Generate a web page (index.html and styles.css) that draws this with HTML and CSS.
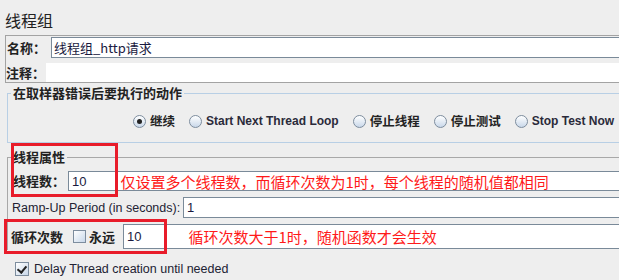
FILE: index.html
```html
<!DOCTYPE html>
<html lang="zh-CN">
<head>
  <meta charset="UTF-8">
  <title>线程组</title>
  <link rel="stylesheet" href="styles.css">
</head>
<body>
  <div class="page">
    <h1 class="title">线程组</h1>

    <div class="name-panel">
      <div class="name-row">
        <span class="label name-label">名称：</span>
        <div class="field name-field">线程组_http请求</div>
      </div>
      <div class="comment-row">
        <span class="label comment-label">注释：</span>
        <div class="field comment-field"></div>
      </div>
    </div>

    <fieldset class="group error-group">
      <legend>在取样器错误后要执行的动作</legend>
      <div class="radio-row">
        <label class="option"><span class="radio checked"></span><span class="cn">继续</span></label>
        <label class="option"><span class="radio"></span><span class="en">Start Next Thread Loop</span></label>
        <label class="option"><span class="radio"></span><span class="cn">停止线程</span></label>
        <label class="option"><span class="radio"></span><span class="cn">停止测试</span></label>
        <label class="option"><span class="radio"></span><span class="en">Stop Test Now</span></label>
      </div>
    </fieldset>

    <fieldset class="group thread-group">
      <legend>线程属性</legend>
      <div class="prop-row threads-row">
        <span class="label threads-label">线程数：</span>
        <div class="field">10<span class="note note-threads">仅设置多个线程数，而循环次数为1时，每个线程的随机值都相同</span></div>
      </div>
      <div class="prop-row ramp-row">
        <span class="plain ramp-label">Ramp-Up Period (in seconds):</span>
        <div class="field">1</div>
      </div>
      <div class="prop-row loop-row">
        <span class="label loop-label">循环次数</span>
        <span class="checkbox"></span>
        <span class="label forever-label">永远</span>
        <div class="field loop-field">10<span class="note note-loop">循环次数大于1时，随机函数才会生效</span></div>
      </div>
    </fieldset>

    <div class="delay-row">
      <span class="checkbox checked"></span>
      <span class="plain">Delay Thread creation until needed</span>
    </div>

    <div class="mark mark-threads"></div>
    <div class="mark mark-loop"></div>
  </div>
</body>
</html>
```

FILE: styles.css
```css
body {
  margin: 0;
  width: 619px;
  height: 280px;
  overflow: hidden;
  background: #eeeeee;
  color: #333333;
  font-family: "Liberation Sans", Arial, "Noto Sans CJK SC", sans-serif;
}

.page {
  position: relative;
  width: 619px;
  height: 280px;
  overflow: hidden;
}

.title {
  margin: 0;
  height: 25px;
  padding: 10px 0 0 5px;
  box-sizing: border-box;
  font-family: "Noto Sans CJK SC", sans-serif;
  font-size: 16px;
  font-weight: normal;
  line-height: 20px;
  color: #222222;
}

.label {
  font-family: "Noto Sans CJK SC", sans-serif;
  font-size: 13px;
  font-weight: bold;
  line-height: 16px;
  color: #222222;
  flex-shrink: 0;
}

.plain {
  font-size: 12.5px;
  line-height: 16px;
  color: #222233;
  flex-shrink: 0;
}

/* text fields */
.field {
  flex: 1;
  min-width: 0;
  display: flex;
  align-items: center;
  box-sizing: border-box;
  background: #ffffff;
  border: 1px solid #7a8a99;
  border-right: none;
  padding-left: 3px;
  font-size: 13px;
  color: #1a1a40;
  white-space: nowrap;
  overflow: hidden;
}

/* name / comment panel */
.name-panel {
  margin: 10px 0 0 5px;
  border: 1px solid #a3a3a3;
  border-right: none;
}

.name-row {
  display: flex;
  align-items: center;
  padding-top: 1px;
}

.name-label {
  width: 44px;
  padding-left: 1px;
}

.name-field {
  height: 21px;
  font-family: "Noto Sans CJK SC", sans-serif;
  padding-left: 2px;
}

.comment-row {
  display: flex;
  align-items: center;
  margin-top: 5px;
}

.comment-label {
  width: 40px;
}

.comment-field {
  height: 19px;
  border: none;
}

/* titled groups */
.group {
  margin: 2px 0 0 7px;
  padding: 0;
  min-width: 0;
  border: 1px solid #b8cfe5;
  border-right: none;
}

.group legend {
  margin-left: 3px;
  padding: 0 2px;
  font-family: "Noto Sans CJK SC", sans-serif;
  font-size: 13px;
  font-weight: bold;
  line-height: 16px;
  color: #222222;
}

.error-group {
  padding: 12px 0 13px 0;
}

.radio-row {
  display: flex;
  align-items: center;
  gap: 14px;
  height: 16px;
  padding-left: 125px;
  white-space: nowrap;
}

.option {
  display: flex;
  align-items: center;
  gap: 4px;
  flex-shrink: 0;
}

.option .cn {
  font-family: "Noto Sans CJK SC", sans-serif;
  font-size: 12.5px;
  font-weight: bold;
  line-height: 16px;
  color: #222222;
}

.option .en {
  font-size: 12px;
  font-weight: bold;
  line-height: 16px;
  color: #2a2a3a;
}

.radio {
  position: relative;
  width: 13px;
  height: 13px;
  box-sizing: border-box;
  border-radius: 50%;
  border: 1px solid #7d8d9e;
  background: linear-gradient(#ffffff, #c9d8ea);
}

.radio.checked::after {
  content: "";
  position: absolute;
  left: 3px;
  top: 3px;
  width: 5px;
  height: 5px;
  border-radius: 50%;
  background: #222222;
}

.checkbox {
  position: relative;
  flex-shrink: 0;
  width: 13px;
  height: 13px;
  box-sizing: border-box;
  border: 1px solid #7d8d9e;
  background: linear-gradient(135deg, #ffffff, #c9d8ea);
}

.checkbox.checked::after {
  content: "";
  position: absolute;
  left: 3px;
  top: 1px;
  width: 4px;
  height: 7px;
  border-right: 2px solid #222222;
  border-bottom: 2px solid #222222;
  transform: rotate(40deg);
}

.thread-group {
  margin-top: 6px;
  padding: 6px 0 1px 5px;
  border-color: #a8a8a8;
  border-bottom: none;
}

.thread-group legend {
  margin-left: -2px;
}

.prop-row {
  display: flex;
  align-items: center;
}

.threads-row .field {
  height: 20px;
}

.threads-label {
  width: 55px;
}

.ramp-row {
  margin-top: 6px;
}

.ramp-row .field {
  height: 21px;
}

.ramp-label {
  width: 171px;
  margin-left: -1px;
}

.loop-row {
  margin-top: 6px;
}

.loop-label {
  width: 62px;
  margin-left: -2px;
}

.forever-label {
  width: 34px;
  margin-left: 2px;
  padding-left: 1px;
}

.loop-field {
  height: 25px;
}

.note {
  font-family: "Noto Sans CJK SC", sans-serif;
  font-size: 15px;
  color: #ff1a1a;
}

.note-threads {
  margin-left: 34px;
}

.note-loop {
  margin-left: 47px;
}

.delay-row {
  display: flex;
  align-items: center;
  gap: 5px;
  margin: 11px 0 0 15px;
}

.delay-row .checkbox {
  width: 14px;
  height: 14px;
}

/* red annotation boxes drawn over the form */
.mark {
  position: absolute;
  box-sizing: border-box;
  border: 3px solid #e81c2a;
}

.mark-threads {
  left: 11px;
  top: 143px;
  width: 107px;
  height: 54px;
}

.mark-loop {
  left: 4px;
  top: 219px;
  width: 163px;
  height: 35px;
}
```
